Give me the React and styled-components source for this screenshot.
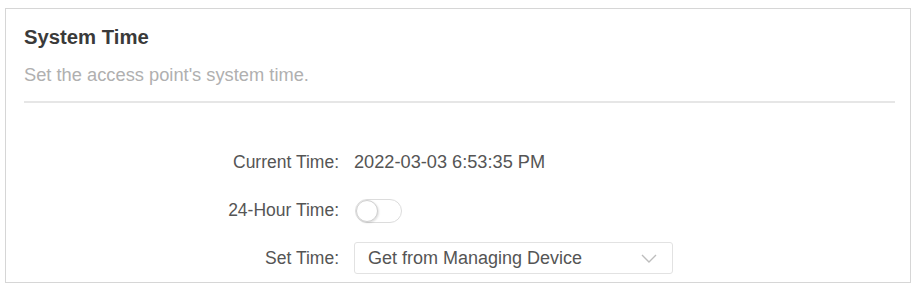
import React from "react";
import styled, { createGlobalStyle } from "styled-components";

const Global = createGlobalStyle`
  html, body { margin: 0; padding: 0; background: #ffffff; }
  body { font-family: "Liberation Sans", Arial, sans-serif; }
`;

const Page = styled.div`
  padding: 8px 4px 0 5px;
`;

const Card = styled.section`
  box-sizing: border-box;
  width: 906px;
  height: 275px;
  border: 1px solid #d6d6d6;
  padding: 16px 15px 0 18px;
  background: #fff;
`;

const Title = styled.h2`
  margin: 0;
  font-size: 20.3px;
  line-height: 24px;
  font-weight: bold;
  color: #3a3a3a;
`;

const Subtitle = styled.p`
  margin: 15px 0 0 0;
  font-size: 18.3px;
  line-height: 22px;
  color: #b0b0b0;
`;

const Divider = styled.hr`
  margin: 15px 0 0 0;
  border: 0;
  border-top: 2px solid #e6e6e6;
  height: 0;
`;

const Form = styled.div`
  display: grid;
  grid-template-columns: 315px 1fr;
  column-gap: 15px;
  row-gap: 16px;
  margin-top: 43px;
  align-items: center;
`;

const Label = styled.div`
  height: 32px;
  display: flex;
  align-items: center;
  justify-content: flex-end;
  font-size: 17.5px;
  color: #555;
`;

const Value = styled.div`
  height: 32px;
  display: flex;
  align-items: center;
  font-size: 18.2px;
  color: #555;
`;

const Toggle = styled.span`
  box-sizing: border-box;
  width: 47px;
  height: 24px;
  border: 1px solid #dcdcdc;
  border-radius: 12px;
  background: #fff;
  display: flex;
  align-items: center;
  margin: 1px 0 0 1px;
`;

const Knob = styled.span`
  box-sizing: border-box;
  width: 22px;
  height: 22px;
  border-radius: 50%;
  background: #fff;
  border: 1px solid #d0d0d0;
  box-shadow: 1px 1px 2px rgba(0, 0, 0, 0.12);
`;

const Select = styled.div`
  box-sizing: border-box;
  width: 319px;
  height: 32px;
  border: 1px solid #e2e2e2;
  border-radius: 3px;
  display: flex;
  align-items: center;
  justify-content: space-between;
  padding: 0 15px 0 13px;
  font-size: 18px;
  color: #555;
`;

const Chevron = () => (
  <svg width="16" height="9" viewBox="0 0 16 9" aria-hidden="true">
    <polyline points="1,1 8,8 15,1" fill="none" stroke="#bdbdbd" strokeWidth="1.4" />
  </svg>
);

export default function App() {
  return (
    <>
      <Global />
      <Page>
        <Card>
          <Title>System Time</Title>
          <Subtitle>Set the access point's system time.</Subtitle>
          <Divider />
          <Form>
            <Label>Current Time:</Label>
            <Value>2022-03-03 6:53:35 PM</Value>
            <Label>24-Hour Time:</Label>
            <Value>
              <Toggle>
                <Knob />
              </Toggle>
            </Value>
            <Label>Set Time:</Label>
            <Value>
              <Select>
                <span>Get from Managing Device</span>
                <Chevron />
              </Select>
            </Value>
          </Form>
        </Card>
      </Page>
    </>
  );
}
